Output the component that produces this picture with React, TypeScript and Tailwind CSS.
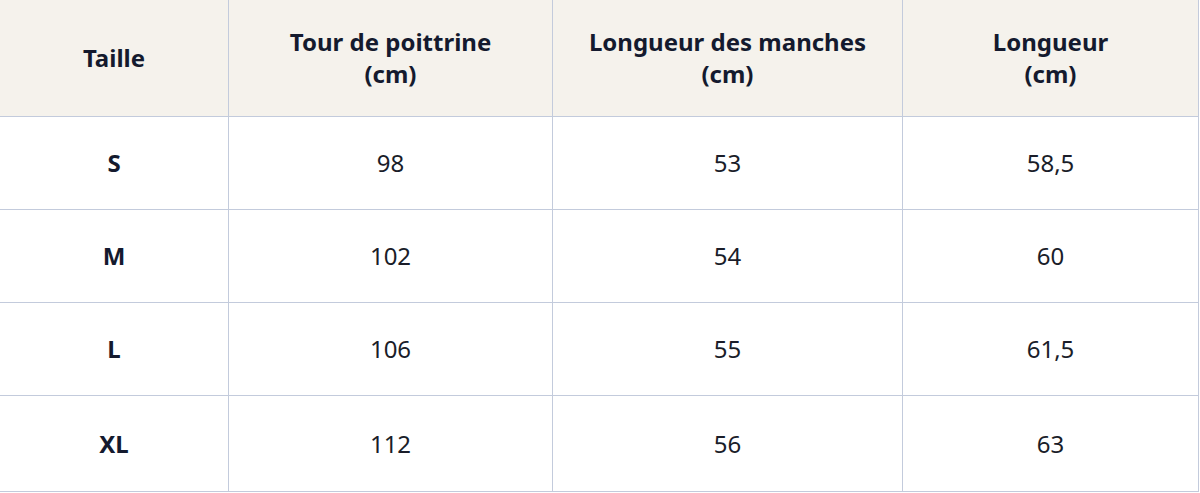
import React from 'react';

const HEADERS = ['Taille', 'Tour de poittrine\n(cm)', 'Longueur des manches\n(cm)', 'Longueur\n(cm)'];

const ROWS: string[][] = [
  ['S', '98', '53', '58,5'],
  ['M', '102', '54', '60'],
  ['L', '106', '55', '61,5'],
  ['XL', '112', '56', '63'],
];

const COLS = 'grid grid-cols-[228px_324px_350px_296px]';

export default function App() {
  return (
    <div className="w-[1200px] h-[493px] bg-white font-['Noto_Sans',sans-serif] text-[#141a2e]">
      <div className="w-[1199px] border-r border-b border-[#c3cbdc]">
        <div className={`${COLS} h-[117px] bg-[#f5f2ec] border-b border-[#c3cbdc]`}>
          {HEADERS.map((h, i) => (
            <div
              key={h}
              className={`flex items-center justify-center text-center whitespace-pre-line text-[24px] leading-[32px] font-bold ${i > 0 ? 'border-l border-[#c3cbdc]' : ''}`}
            >
              {h}
            </div>
          ))}
        </div>
        {ROWS.map((row, r) => (
          <div key={row[0]} className={`${COLS} h-[93px] ${r < ROWS.length - 1 ? 'border-b border-[#c3cbdc]' : 'h-[95px]'}`}>
            {row.map((cell, i) => (
              <div
                key={i}
                className={`flex items-center justify-center text-[24px] ${i === 0 ? 'font-bold' : 'text-[#1a1d29]'} ${i > 0 ? 'border-l border-[#c3cbdc]' : ''}`}
              >
                {cell}
              </div>
            ))}
          </div>
        ))}
      </div>
    </div>
  );
}
